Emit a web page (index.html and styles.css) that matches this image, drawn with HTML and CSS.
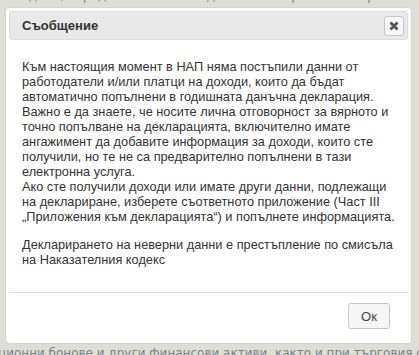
FILE: index.html
```html
<!DOCTYPE html>
<html lang="bg">
<head>
    <meta charset="UTF-8">
    <meta name="viewport" content="width=device-width, initial-scale=1.0">
    <title>Съобщение</title>
    <link rel="stylesheet" href="styles.css">
</head>
<body>
    <div class="page">
        <p class="page-line top">е година, определена база и подаване своевременно в срока</p>
        <p class="page-line bottom">ционни бонове и други финансови активи, както и при търговия с чуж</p>
    </div>

    <div class="dialog">
        <div class="titlebar">
            <span class="title">Съобщение</span>
            <button class="close" title="Затвори">
                <svg width="10" height="10" viewBox="0 0 10 10">
                    <path d="M1.5 1.5 L8.5 8.5 M8.5 1.5 L1.5 8.5" stroke="#555" stroke-width="2.8"/>
                </svg>
            </button>
        </div>
        <div class="content">
            <p>Към настоящия момент в НАП няма постъпили данни от<br>
            работодатели и/или платци на доходи, които да бъдат<br>
            автоматично попълнени в годишната данъчна декларация.<br>
            Важно е да знаете, че носите лична отговорност за вярното и<br>
            точно попълване на декларацията, включително имате<br>
            ангажимент да добавите информация за доходи, които сте<br>
            получили, но те не са предварително попълнени в тази<br>
            електронна услуга.<br>
            Ако сте получили доходи или имате други данни, подлежащи<br>
            на деклариране, изберете съответното приложение (Част III<br>
            „Приложения към декларацията“) и попълнете информацията.</p>
            <p>Декларирането на неверни данни е престъпление по смисъла<br>
            на Наказателния кодекс</p>
        </div>
        <div class="buttonpane">
            <button class="btn">Ок</button>
        </div>
    </div>
</body>
</html>
```

FILE: styles.css
```css
body {
    margin: 0;
    height: 355px;
    overflow: hidden;
    background: #dedfd4;
    font-family: "Liberation Sans", Arial, sans-serif;
}
.page {
    width: 419px;
    height: 355px;
    overflow: hidden;
    display: flex;
    flex-direction: column;
    justify-content: space-between;
}
.page-line {
    margin: 0;
    white-space: nowrap;
    font-family: "DejaVu Sans", sans-serif;
    font-size: 12px;
    line-height: 14px;
    color: #76828c;
}
.page-line.top {
    margin-top: -11px;
    margin-left: 4px;
}
.page-line.bottom {
    margin-bottom: -5px;
    margin-left: -2px;
}
.dialog {
    position: absolute;
    left: 5px;
    top: 7px;
    width: 399px;
    height: 329px;
    padding: 3px;
    background: #fff;
    border: 1px solid #d3d3d3;
    border-radius: 4px;
    display: flex;
    flex-direction: column;
}
.titlebar {
    display: flex;
    align-items: center;
    justify-content: space-between;
    height: 27px;
    padding: 0 3px 0 12px;
    background: #e9e9e9;
    border: 1px solid #dddddd;
    border-radius: 3px;
}
.title {
    font-weight: bold;
    font-size: 13px;
    color: #333;
}
.close {
    width: 20px;
    height: 20px;
    padding: 0;
    display: flex;
    align-items: center;
    justify-content: center;
    background: #f6f6f6;
    border: 1px solid #c5c5c5;
    border-radius: 3px;
}
.content {
    flex: 1;
    padding: 19px 13px 0 13px;
    font-size: 12.75px;
    line-height: 15px;
    color: #333;
    white-space: nowrap;
}
.content p {
    margin: 0 0 13px 0;
}
.buttonpane {
    display: flex;
    justify-content: flex-end;
    padding: 10px 18px 11px 0;
    border-top: 1px solid #dddddd;
}
.btn {
    width: 42px;
    height: 26px;
    font-family: "Liberation Sans", Arial, sans-serif;
    font-size: 13px;
    color: #454545;
    background: #f6f6f6;
    border: 1px solid #c5c5c5;
    border-radius: 3px;
}
```
